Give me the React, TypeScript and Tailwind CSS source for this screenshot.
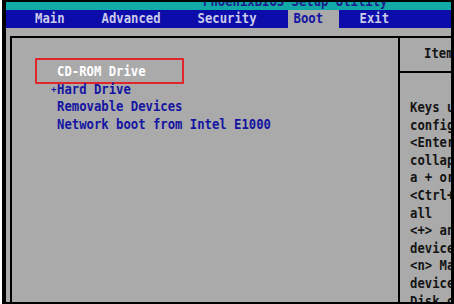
const font = { fontFamily: '"DejaVu Sans Mono", "Liberation Mono", monospace' };

const helpLines = [
  'Keys used to view or',
  'configure devices:',
  '<Enter> expands or',
  'collapses devices with',
  'a + or -',
  '<Ctrl+Enter> expands',
  'all',
  '<+> and <-> moves the',
  'device up or down.',
  '<n> May move removable',
  'device between Hard',
  'Disk or Removable Disk',
];

const App = () => {
  return (
    <div className="flex w-[454px] h-[304px] bg-black overflow-hidden text-[12.25px] font-bold" style={font}>
      <div className="w-[2px] h-full bg-white shrink-0" />
      <div className="w-[4px] h-full bg-black shrink-0" />

      <div className="flex flex-col w-[445px] h-[302px] pt-[2px] shrink-0">
        {/* title band */}
        <div className="h-[8px] shrink-0 bg-[#12a9a9] overflow-hidden">
          <div className="ml-[197px] -mt-[7px] leading-[14px] text-[#1c1c8e] scale-y-[1.12] whitespace-nowrap">
            PhoenixBIOS Setup Utility
          </div>
        </div>

        {/* menu bar */}
        <div className="flex h-[18px] shrink-0 bg-[#0c0caa] items-stretch text-[#cbcbec] leading-[18px]">
          <div className="ml-[29px] scale-y-[1.12]">Main</div>
          <div className="ml-[37px] scale-y-[1.12]">Advanced</div>
          <div className="ml-[37px] scale-y-[1.12]">Security</div>
          <div className="ml-[31px] w-[51px] pl-[6px] bg-[#aaaaaa] text-[#1414a2]">
            <div className="scale-y-[1.12]">Boot</div>
          </div>
          <div className="ml-[21px] scale-y-[1.12]">Exit</div>
        </div>

        {/* body */}
        <div className="flex-1 min-h-0 flex bg-[#aaaaaa] pt-[8px] pl-[4px] overflow-hidden">
          <div className="flex-1 flex border-l-2 border-t-2 border-black">
            <div className="relative w-[386px] shrink-0 pt-[26px] pl-[45px] leading-[17.67px] text-[#1414a2]">
              <div className="absolute left-[23px] top-[20px] w-[149px] h-[26px] border-2 border-[#e0262a] rounded-[1px]" />
              <div className="text-white scale-y-[1.12]">CD-ROM Drive</div>
              <div className="relative">
                <span className="absolute -left-[6px] top-[-1px] text-[9px]">+</span>
                <div className="scale-y-[1.12]">Hard Drive</div>
              </div>
              <div className="scale-y-[1.12]">Removable Devices</div>
              <div className="scale-y-[1.12]">Network boot from Intel E1000</div>
            </div>

            <div className="flex-1 flex flex-col border-l-2 border-black text-[#141414] overflow-hidden whitespace-nowrap">
              <div className="h-[33px] shrink-0 pl-[24px] pt-[8px] leading-[17.67px]">
                <div className="scale-y-[1.12]">Item Specific Help</div>
              </div>
              <div className="border-t-2 border-black pt-[27px] pl-[10px] leading-[17.6px]">
                {helpLines.map((line, i) => (
                  <div key={i} className="scale-y-[1.12]">{line}</div>
                ))}
              </div>
            </div>
          </div>
        </div>
      </div>
    </div>
  );
};

export default App;
